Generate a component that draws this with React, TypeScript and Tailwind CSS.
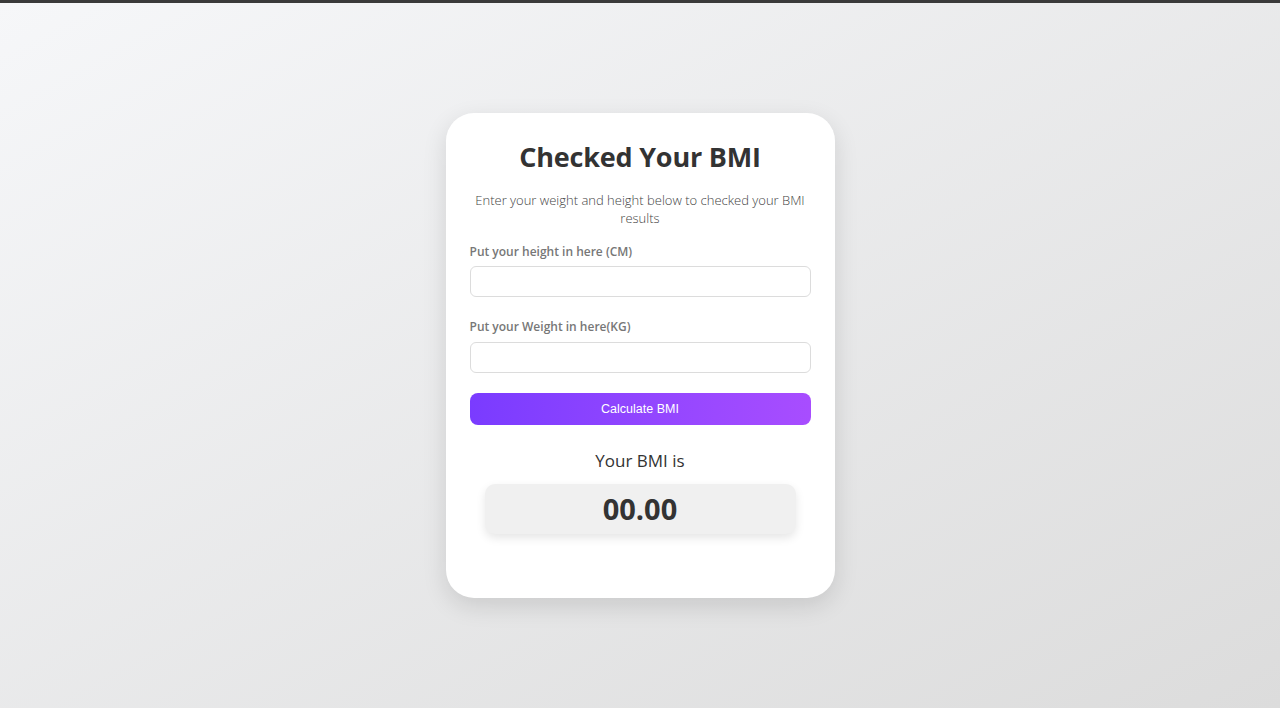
export default function App() {
  return (
    <div className="min-h-[708px] w-full border-t-[3px] border-[#3a3a3a] bg-gradient-to-br from-[#f6f7f9] to-[#dcdcdc] flex justify-center font-['Open_Sans',sans-serif]">
      <div className="mt-[110px] mb-auto w-[389px] h-[485px] bg-white rounded-[28px] shadow-[0_8px_24px_rgba(0,0,0,0.12)] px-6 pt-[26px] flex flex-col">
        <h1 className="text-center text-[27px] font-bold text-[#333] leading-[36px] tracking-[-0.2px]">Checked Your BMI</h1>
        <p className="mt-[16px] text-center text-[13px] font-light text-[#444] leading-[18px]">
          Enter your weight and height below to checked your BMI results
        </p>
        <label className="mt-[17px] text-[12px] font-semibold text-[#777] leading-[16px]">Put your height in here (CM)</label>
        <input className="mt-[6px] h-[31px] w-full rounded-[6px] border border-[#dcdcdc] outline-none px-2 text-sm" />
        <label className="mt-[22px] text-[12px] font-semibold text-[#777] leading-[16px]">Put your Weight in here(KG)</label>
        <input className="mt-[7px] h-[31px] w-full rounded-[6px] border border-[#dcdcdc] outline-none px-2 text-sm" />
        <button className="mt-[20px] h-[32px] w-full rounded-[8px] bg-gradient-to-r from-[#7a3bff] to-[#a84dff] text-white text-[12.5px] font-['Liberation_Sans',sans-serif]">
          Calculate BMI
        </button>
        <div className="mt-[24px] text-center text-[17px] text-[#333] leading-[24px]">Your BMI is</div>
        <div className="mt-[11px] mx-auto w-[311px] h-[50px] rounded-[10px] bg-[#f0f0f0] shadow-[0_4px_10px_rgba(0,0,0,0.1)] flex items-center justify-center text-[29px] font-bold text-[#333]">
          00.00
        </div>
      </div>
    </div>
  );
}
